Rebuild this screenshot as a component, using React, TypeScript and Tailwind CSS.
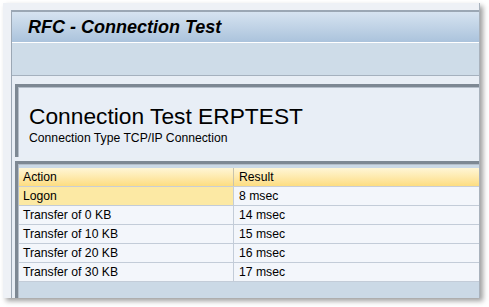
const rows = [
  { action: "Logon", result: "8 msec", hi: true },
  { action: "Transfer of 0 KB", result: "14 msec" },
  { action: "Transfer of 10 KB", result: "15 msec" },
  { action: "Transfer of 20 KB", result: "16 msec" },
  { action: "Transfer of 30 KB", result: "17 msec" },
];

export default function App() {
  return (
    <div className="h-[307px] w-[489px] overflow-hidden bg-white pt-[3px] pl-[3px] font-['Liberation_Sans',Arial,sans-serif] text-black">
      <div className="flex h-[295px] w-[477px] flex-col border-r border-[#a9b2bc] bg-[#eef1f6] pt-[7px] pl-[8px] shadow-[3px_3px_5px_rgba(0,0,0,0.38)]">
        <div className="flex flex-1 flex-col border-t-2 border-l border-[#9ba7b4] bg-[#e8eef5]">
          {/* title bar */}
          <div className="flex h-[30px] items-center bg-gradient-to-b from-[#d6e3f0] to-[#abc3dc] pl-[16px]">
            <span className="text-[18px] leading-none font-bold italic">RFC - Connection Test</span>
          </div>
          {/* toolbar */}
          <div className="h-[34px] border-t border-b border-t-white border-b-[#a5b1be] bg-[#cedce8]" />

          <div className="flex flex-1 flex-col pt-[8px] pl-[3px]">
            {/* header box */}
            <div className="h-[73px] border-t-[3px] border-l-[3px] border-[#7d8893] bg-[#e8eef6] pt-[18px] pl-[11px] shadow-[inset_1px_1px_0_#b4bec9]">
              <div className="text-[22.75px] leading-none">Connection Test ERPTEST</div>
              <div className="mt-[4px] text-[12.2px] leading-none">Connection Type TCP/IP Connection</div>
            </div>

            {/* result table */}
            <div className="mt-[4px] flex-1 border-t-[3px] border-l-[3px] border-[#7d8893] bg-[#cbd9e6] pt-[4px] pl-[1px] shadow-[inset_1px_1px_0_#b4bec9]">
              <div className="text-[12.2px]">
                <div className="flex h-[19px] border-b border-[#c9ced6] bg-gradient-to-b from-[#fff6d6] to-[#fddd80]">
                  <div className="w-[215px] border-r border-[#c8c3ad] pl-[4px] leading-[18px]">Action</div>
                  <div className="flex-1 pl-[5px] leading-[18px]">Result</div>
                </div>
                {rows.map((r) => (
                  <div key={r.action} className="flex h-[19px] border-b border-[#c3ccd8] bg-[#f3f6fb]">
                    <div
                      className={
                        r.hi
                          ? "w-[215px] border-r border-[#c3ccd8] bg-[#fce9a4] pl-[4px] leading-[18px]"
                          : "w-[215px] border-r border-[#c3ccd8] pl-[4px] leading-[18px]"
                      }
                    >
                      {r.action}
                    </div>
                    <div className="flex-1 pl-[5px] leading-[18px]">{r.result}</div>
                  </div>
                ))}
              </div>
            </div>
          </div>
        </div>
      </div>
    </div>
  );
}
